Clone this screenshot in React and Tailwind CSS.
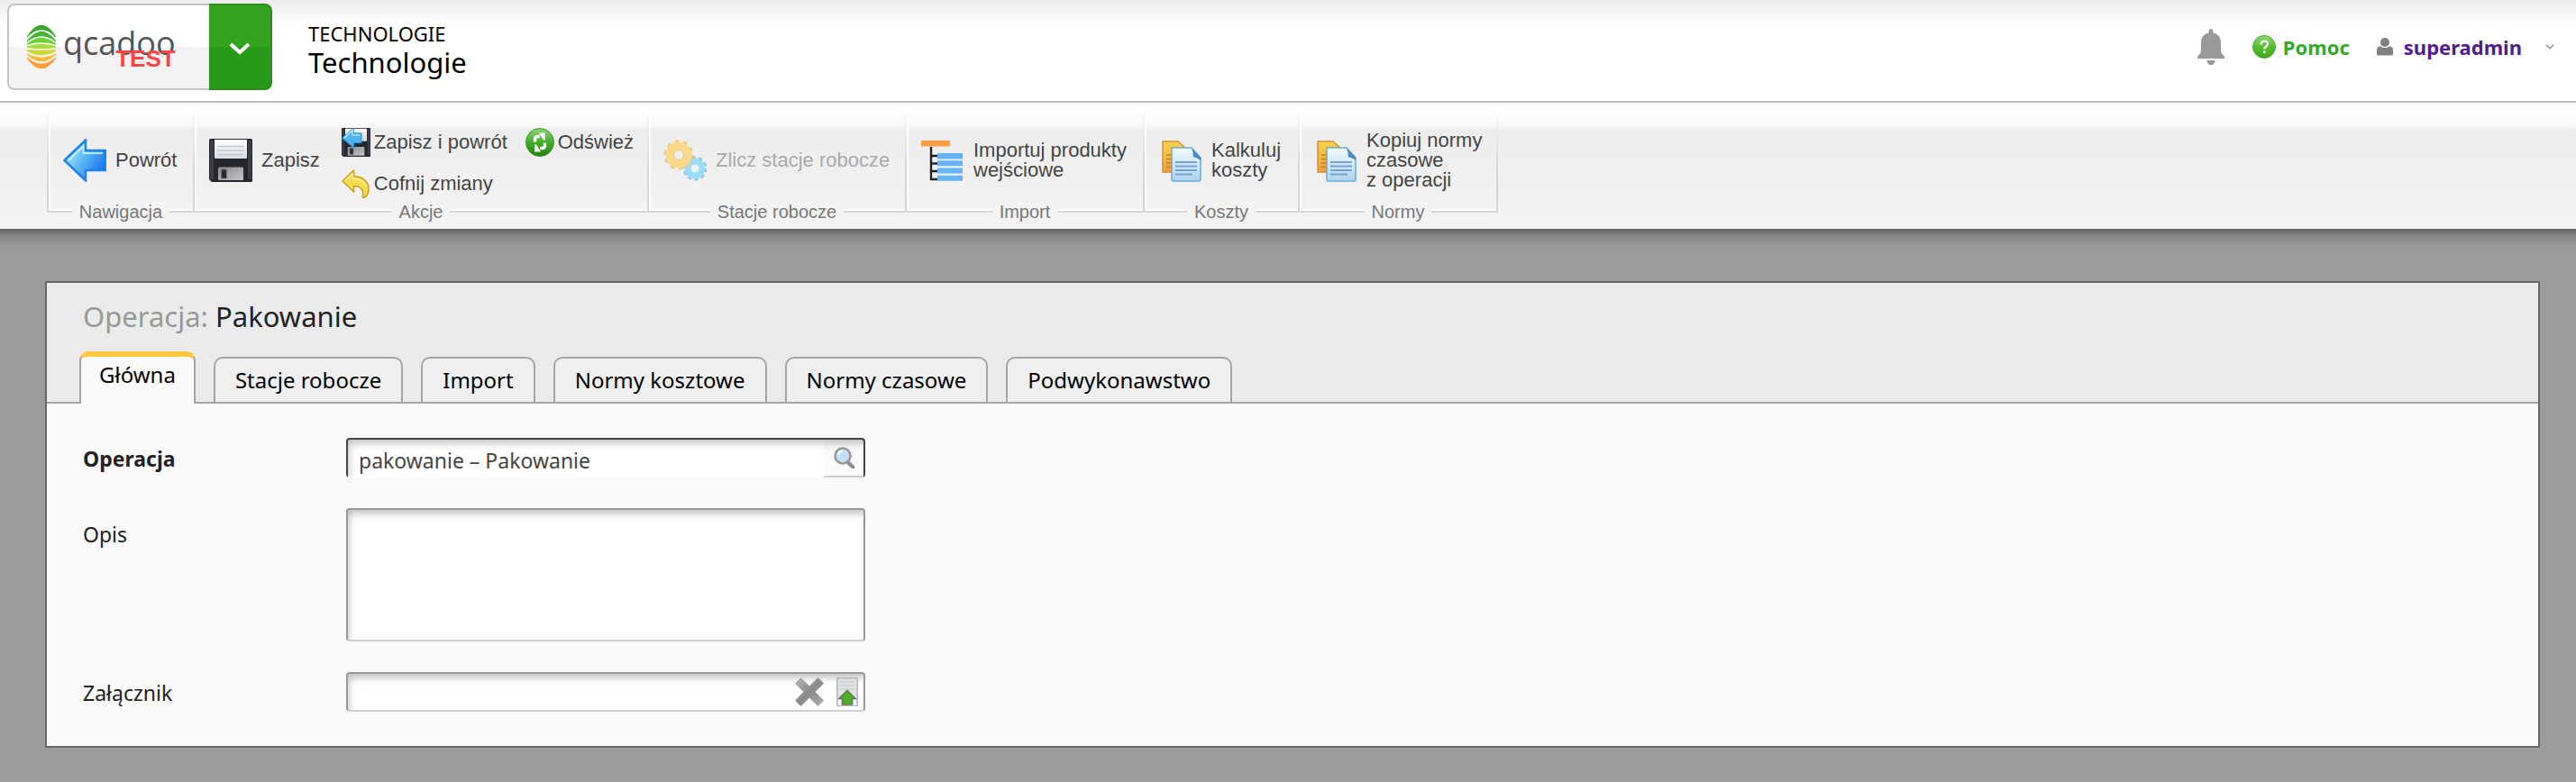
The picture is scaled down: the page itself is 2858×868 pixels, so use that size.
import React from "react";

const HUMANIST = "font-['Noto_Sans','Open_Sans',sans-serif]";

const LOGO_BANDS = [
  { color: "#3aaa2c", top: 0, bottom: 5, edge: 13 },
  { color: "#45b333", top: 7, bottom: 12, edge: 18 },
  { color: "#6cd335", top: 14, bottom: 19, edge: 21 },
  { color: "#a8dc3c", top: 21, bottom: 26, edge: 24 },
  { color: "#cfd92f", top: 28, bottom: 33, edge: 28 },
  { color: "#fbb937", top: 36, bottom: 40, edge: 32 },
  { color: "#ff9f37", top: 43, bottom: 48, edge: 36 },
];

function LogoMark() {
  return (
    <svg className="h-12 w-8 shrink-0" viewBox="0 0 32 48" aria-hidden="true">
      {LOGO_BANDS.map(({ color, top, bottom, edge }) => (
        <path
          key={color}
          d={`M0 ${edge - 0.7}Q16 ${2 * top - edge} 32 ${edge - 0.7}V${edge + 0.7}Q16 ${2 * bottom - edge} 0 ${edge + 0.7}Z`}
          fill={color}
        />
      ))}
    </svg>
  );
}

function Chevron({ className }) {
  return (
    <svg className={className} viewBox="0 0 24 14" fill="none" stroke="currentColor" strokeWidth="4" aria-hidden="true">
      <path d="M2 2l10 9L22 2" />
    </svg>
  );
}

function BellIcon() {
  return (
    <svg className="h-10 w-8" viewBox="0 0 32 40" fill="#999" aria-hidden="true">
      <path d="M16 0c1.500 0 2.300 1 2.300 2.300v2.200C24 5.500 27 10 27 15.500V23c0 3 1 5 3.500 7 1 1 1 3-.5 3H2c-1.500 0-1.500-2-.5-3C4 28 5 26 5 23v-7.500C5 10 8 5.500 13.700 4.500V2.300C13.700 1 14.500 0 16 0z" />
      <path d="M11.500 35h9c0 3-2 5-4.500 5s-4.500-2-4.500-5z" />
    </svg>
  );
}

function HelpIcon() {
  return (
    <svg className="h-[26px] w-[26px]" viewBox="0 0 26 26" aria-hidden="true">
      <defs>
        <linearGradient id="help" x1="0" y1="0" x2="0" y2="1">
          <stop offset="0" stopColor="#8fd873" />
          <stop offset=".5" stopColor="#55bf2c" />
          <stop offset="1" stopColor="#3da81b" />
        </linearGradient>
      </defs>
      <circle cx="13" cy="13" r="12.500" fill="url(#help)" stroke="#4aa830" />
      <path d="M9.500 10.500c0-5 7.500-5 7.500-.7 0 2.700-3.700 2.700-3.700 5.700" fill="none" stroke="#fff" strokeWidth="2.400" />
      <circle cx="13.300" cy="18.800" r="1.500" fill="#fff" />
    </svg>
  );
}

function UserIcon() {
  return (
    <svg className="h-5 w-[18px]" viewBox="0 0 18 20" fill="#808080" aria-hidden="true">
      <circle cx="9" cy="5" r="5" />
      <path d="M0 13c0-3 3-4 4.500-3.500 2.500 2 6.500 2 9 0C15 9 18 10 18 13v5c0 1-.7 1.500-1.700 1.500H1.700C.7 19.500 0 19 0 18z" />
    </svg>
  );
}

function BackIcon() {
  return (
    <svg className="h-12 w-12 shrink-0" viewBox="0 0 48 48" aria-hidden="true">
      <defs>
        <linearGradient id="back" x1="0" y1="0" x2="1" y2=".6">
          <stop offset="0" stopColor="#d5f3fd" />
          <stop offset=".45" stopColor="#6cc5f8" />
          <stop offset="1" stopColor="#1a78ea" />
        </linearGradient>
      </defs>
      <path d="M1.500 24L25 1.500V13h22v22H25v11.500z" fill="url(#back)" stroke="#1b83ee" strokeWidth="2.500" />
      <path d="M6 24L22.500 8v8H44" fill="none" stroke="#d9f4ff" strokeWidth="2" opacity=".8" />
    </svg>
  );
}

function FloppyShape() {
  return (
    <>
      <path d="M0 1.500Q0 0 1.500 0h45Q48 0 48 1.500v45q0 1.500-1.500 1.500H3l-3-3z" fill="#24262e" />
      <path d="M1 2h4v43H1zM43 2h4v43h-4z" fill="#3b3e49" />
      <path d="M6 1h36v19.500Q42 22 40.500 22h-33Q6 22 6 20.500z" fill="url(#paper)" />
      <path d="M9 8.500h30M9 13h30M9 17.500h30" stroke="#c6c9cc" strokeWidth="1.400" />
      <path d="M10 33q0-1.500 1.500-1.500h25q1.500 0 1.500 1.500v13H10z" fill="url(#shutter)" />
      <path d="M13.500 34h6v10h-6z" fill="#26282f" />
      <path d="M13.500 34h6v10h-6z" fill="none" stroke="#777" />
    </>
  );
}

function SaveIcon() {
  return (
    <svg className="h-12 w-12 shrink-0" viewBox="0 0 48 48" aria-hidden="true">
      <defs>
        <linearGradient id="paper" x1="0" y1="0" x2="0" y2="1">
          <stop offset="0" stopColor="#fff" />
          <stop offset="1" stopColor="#d8dde6" />
        </linearGradient>
        <linearGradient id="shutter" x1="0" y1="0" x2="1" y2="1">
          <stop offset="0" stopColor="#8a8a8a" />
          <stop offset="1" stopColor="#c4c4c4" />
        </linearGradient>
      </defs>
      <FloppyShape />
    </svg>
  );
}

function SaveBackIcon() {
  return (
    <svg className="h-8 w-8 shrink-0" viewBox="0 0 48 48" aria-hidden="true">
      <FloppyShape />
      <path d="M1 17L20 0v9h13v16H20v8z" fill="#4db4f0" stroke="#2b90d8" strokeWidth="1.500" />
      <path d="M4 17L18 4v8h13" fill="none" stroke="#b5e4fb" strokeWidth="2.500" />
    </svg>
  );
}

function RefreshIcon() {
  return (
    <svg className="h-8 w-8 shrink-0" viewBox="0 0 32 32" aria-hidden="true">
      <defs>
        <linearGradient id="refresh" x1="0" y1="0" x2="0" y2="1">
          <stop offset="0" stopColor="#8ed67c" />
          <stop offset=".5" stopColor="#3fae27" />
          <stop offset="1" stopColor="#2b7d14" />
        </linearGradient>
      </defs>
      <circle cx="16" cy="16" r="15.500" fill="url(#refresh)" stroke="#3a9a25" />
      <path d="M10.500 15.500v-3q0-3 3-3H16M21.500 16.500v3q0 3-3 3H16" fill="none" stroke="#fff" strokeWidth="3.400" />
      <path d="M15 5.500h7v8h-2zM17 26.500h-7v-8h2z" fill="#fff" />
    </svg>
  );
}

function UndoIcon() {
  return (
    <svg className="h-8 w-8 shrink-0" viewBox="0 0 32 32" aria-hidden="true">
      <path
        d="M1 13L13.500 1v6.500C23 8 30 13 30 22c0 4-2 8-5 9.300-1 .4-2 .2-1.500-.9C25 24 22 18.500 13.500 18.500V25z"
        fill="#f4da4f"
        stroke="#c9a227"
        strokeWidth="1.600"
        strokeLinejoin="round"
      />
      <path d="M4 12.500L12 5v5c8 0 14 4 15.500 9" fill="none" stroke="#fdf3a5" strokeWidth="1.400" />
    </svg>
  );
}

function GearsIcon() {
  return (
    <svg className="h-12 w-12 shrink-0" viewBox="0 0 48 48" aria-hidden="true">
      <g fill="none">
        <circle cx="35" cy="33" r="11.500" stroke="#8cc9e6" strokeWidth="4" strokeDasharray="4 3.230" />
        <circle cx="35" cy="33" r="8" stroke="#9bdcf6" strokeWidth="7" />
        <circle cx="17" cy="18" r="15" stroke="#eeca7b" strokeWidth="3" strokeDasharray="4.700 4.720" />
        <circle cx="17" cy="18" r="10" stroke="#fbd98c" strokeWidth="9" />
        <circle cx="17" cy="18" r="5.500" stroke="#eec57a" strokeWidth="1" />
      </g>
    </svg>
  );
}

function TreeIcon() {
  return (
    <svg className="h-12 w-12 shrink-0" viewBox="0 0 48 48" aria-hidden="true">
      <path d="M11 9v36h8M11 19h8M11 27.500h8M11 36h8" fill="none" stroke="#1e2328" strokeWidth="2.400" />
      <path d="M0 2h32v6.500H0z" fill="#ff9d45" />
      <path d="M18 16h28v6.500H18zM18 24.300h28v6H18zM18 32.500h28v6H18zM18 40.700h28v6H18z" fill="#66b3f7" />
    </svg>
  );
}

function CopyIcon() {
  return (
    <svg className="h-12 w-12 shrink-0" viewBox="-3 -1 48 48" aria-hidden="true">
      <defs>
        <linearGradient id="sheetBack" x1="0" y1="0" x2="0" y2="1">
          <stop offset="0" stopColor="#f8d54c" />
          <stop offset="1" stopColor="#eda03c" />
        </linearGradient>
        <linearGradient id="sheetFront" x1="0" y1="0" x2="0" y2="1">
          <stop offset="0" stopColor="#f3fbff" />
          <stop offset="1" stopColor="#a9d6f0" />
        </linearGradient>
      </defs>
      <path d="M1 2h17l9 8v26H1z" fill="url(#sheetBack)" stroke="#d89030" strokeWidth="1.500" />
      <path d="M5 17h6M5 21.500h6M5 26h6M5 30.500h6" stroke="#c9792a" strokeWidth="1.500" />
      <path d="M11 9h22l10 11v24q0 2-2 2H13q-2 0-2-2z" fill="url(#sheetFront)" stroke="#6fa9d4" strokeWidth="1.500" />
      <path d="M33 9l10 11v3q-5-4-8-3.500Q35 14 33 9z" fill="#4b88c4" />
      <path d="M15 25h24M15 29.500h24M15 34h24M15 38.500h19" stroke="#7d9fcf" strokeWidth="1.800" />
    </svg>
  );
}

function SearchIcon() {
  return (
    <svg className="h-6 w-6" viewBox="0 0 24 24" aria-hidden="true">
      <path d="M16.500 17l6 5.500" stroke="#8a8a8a" strokeWidth="4" strokeLinecap="round" />
      <circle cx="11" cy="10" r="8.500" fill="#c3e0fa" stroke="#9a9a9a" strokeWidth="2.600" />
      <path d="M6 9q1-4 5-4.500" fill="none" stroke="#fff" strokeWidth="2.500" />
    </svg>
  );
}

function CrossIcon() {
  return (
    <svg className="h-8 w-8" viewBox="0 0 32 32" aria-hidden="true">
      <defs>
        <linearGradient id="cross" x1="0" y1="0" x2="1" y2="1">
          <stop offset="0" stopColor="#b8b8b8" />
          <stop offset=".5" stopColor="#8a8a8a" />
          <stop offset="1" stopColor="#b0b0b0" />
        </linearGradient>
      </defs>
      <path d="M6.500 0L16 9.500 25.500 0 32 6.500 22.500 16l9.500 9.500-6.500 6.500L16 22.500 6.500 32 0 25.500 9.500 16 0 6.500z" fill="url(#cross)" />
    </svg>
  );
}

function UploadIcon() {
  return (
    <svg className="h-8 w-6" viewBox="0 0 24 32" aria-hidden="true">
      <path d="M.8.8h22.400v30.400H.8z" fill="#dfe3e6" stroke="#b3b7b9" strokeWidth="1.500" />
      <path d="M4 5h16M4 9h16M4 13h16" stroke="#cdd1d4" strokeWidth="1.500" />
      <path d="M2 24h20v7H2z" fill="#f4f4f4" />
      <path d="M12 14.500l9 9h-3.500v6.500h-11v-6.500H3z" fill="#4fae2c" stroke="#5d7a50" strokeWidth="1.600" />
    </svg>
  );
}

function RibbonGroup({ label, className, children }) {
  return (
    <section
      aria-label={label}
      className={`flex h-[110px] flex-col border-b-2 border-l-2 shadow-[inset_2px_-2px_0_#fff] [border-image:linear-gradient(to_bottom,#f8f8f8,#d6d6d6_60px)_1] ${className}`}
    >
      <div className="flex flex-1 items-center pt-[6px] pl-4">{children}</div>
      <h2 className="-mb-[13px] self-center bg-[#f3f3f3] px-2 text-xl leading-6 text-[#777]">{label}</h2>
    </section>
  );
}

function RibbonButton({ icon, children, disabled, small }) {
  return (
    <button
      type="button"
      disabled={disabled}
      className={`flex items-center text-left text-[22px] leading-[22px] whitespace-nowrap ${small ? "gap-1" : "gap-[10px]"} ${disabled ? "text-[#aaa]" : "text-[#444]"}`}
    >
      {icon}
      <span>{children}</span>
    </button>
  );
}

function Ribbon() {
  return (
    <nav
      aria-label="Akcje"
      className="flex h-[140px] bg-[linear-gradient(to_bottom,#fafafa,#fff_8px,#f8f8f8_27px,#ededed_30px,#f4f4f4)] pt-3 pl-[52px] font-['Liberation_Sans',Arial,sans-serif]"
    >
      <RibbonGroup label="Nawigacja" className="w-[162px]">
        <RibbonButton icon={<BackIcon />}>Powrót</RibbonButton>
      </RibbonGroup>
      <RibbonGroup label="Akcje" className="w-[504px]">
        <RibbonButton icon={<SaveIcon />}>Zapisz</RibbonButton>
        <div className="mt-[6px] ml-6 flex flex-col gap-[14px]">
          <div className="flex gap-5">
            <RibbonButton small icon={<SaveBackIcon />}>Zapisz i powrót</RibbonButton>
            <RibbonButton small icon={<RefreshIcon />}>Odśwież</RibbonButton>
          </div>
          <RibbonButton small icon={<UndoIcon />}>Cofnij zmiany</RibbonButton>
        </div>
      </RibbonGroup>
      <RibbonGroup label="Stacje robocze" className="w-[286px]">
        <RibbonButton disabled icon={<GearsIcon />}>Zlicz stacje robocze</RibbonButton>
      </RibbonGroup>
      <RibbonGroup label="Import" className="w-[264px]">
        <RibbonButton icon={<TreeIcon />}>
          Importuj produkty
          <br />
          wejściowe
        </RibbonButton>
      </RibbonGroup>
      <RibbonGroup label="Koszty" className="w-[172px]">
        <RibbonButton icon={<CopyIcon />}>
          Kalkuluj
          <br />
          koszty
        </RibbonButton>
      </RibbonGroup>
      <RibbonGroup label="Normy" className="w-[222px] border-r-2">
        <RibbonButton icon={<CopyIcon />}>
          Kopiuj normy
          <br />
          czasowe
          <br />z operacji
        </RibbonButton>
      </RibbonGroup>
    </nav>
  );
}

function Header() {
  return (
    <header className="flex h-[114px] items-start border-b-2 border-[#bbb] bg-[linear-gradient(to_bottom,#ececec,#fff_26px)] pt-1 pl-2">
      <div className="flex h-24">
        <a
          href="#start"
          className="flex w-56 items-center rounded-l-lg border-2 border-r-0 border-[#c4c4c4] bg-[linear-gradient(to_bottom,#fff_50%,#f3f3f3_50%)] pl-5"
        >
          <LogoMark />
          <span className="relative mb-2 ml-2 text-4xl leading-[56px] font-medium text-[#555] font-['Open_Sans',sans-serif]">
            qcadoo
            <span className="absolute right-0 -bottom-px text-[26px] leading-6 font-bold text-[#ff4444] font-['Liberation_Sans',Arial,sans-serif]">
              TEST
            </span>
          </span>
        </a>
        <button
          type="button"
          aria-label="Menu"
          className="flex w-[70px] items-center justify-center rounded-r-lg border-2 border-l-0 border-[#269019] bg-[linear-gradient(to_bottom,#33a31f_50%,#29991a_50%)] text-white"
        >
          <Chevron className="mt-1 h-[14px] w-6" />
        </button>
      </div>
      <div className="ml-10 pt-[19px] text-black">
        <p className="text-[22px] leading-7">TECHNOLOGIE</p>
        <h1 className="text-[31px] leading-9">Technologie</h1>
      </div>
      <div className="mt-7 mr-6 ml-auto flex items-center text-[22px] leading-7 font-bold">
        <button type="button" aria-label="Powiadomienia" className="mr-[30px]">
          <BellIcon />
        </button>
        <a href="#pomoc" className="mr-[30px] flex items-center gap-2 text-[#35a826]">
          <HelpIcon />
          Pomoc
        </a>
        <button type="button" className="flex items-center text-[#551a8b]">
          <UserIcon />
          <span className="mr-[26px] ml-3">superadmin</span>
          <span className="text-[#999]">
            <Chevron className="h-[6px] w-[10px]" />
          </span>
        </button>
      </div>
    </header>
  );
}

const TABS = ["Główna", "Stacje robocze", "Import", "Normy kosztowe", "Normy czasowe", "Podwykonawstwo"];

function Tabs() {
  return (
    <div role="tablist" className="-mb-[2px] flex items-end gap-5 pl-9">
      {TABS.map((tab, i) =>
        i === 0 ? (
          <button
            key={tab}
            type="button"
            role="tab"
            aria-selected="true"
            className="h-[58px] rounded-t-[10px] border-x-2 border-t-[6px] border-x-[#a5a5a5] border-t-[#ffc840] bg-[#fafafa] px-5 pb-3 text-2xl leading-7 text-black"
          >
            {tab}
          </button>
        ) : (
          <button
            key={tab}
            type="button"
            role="tab"
            aria-selected="false"
            className="h-[52px] rounded-t-[10px] border-2 border-[#a5a5a5] bg-[#efefef] px-[22px] text-2xl leading-7 text-black"
          >
            {tab}
          </button>
        ),
      )}
    </div>
  );
}

const INSET = "shadow-[inset_5px_8px_8px_-4px_rgba(0,0,0,0.25)]";

function OperationForm() {
  return (
    <form className="flex flex-col gap-[34px] bg-[#fafafa] py-[38px] pl-10 text-[23px] text-[#222]">
      <div className="flex h-11 items-start">
        <label htmlFor="operacja" className="w-[292px] leading-[46px] font-bold">
          Operacja
        </label>
        <div className={`flex h-11 w-[576px] rounded-[4px] border-2 border-b-0 border-[#444] bg-white ${INSET}`}>
          <input
            id="operacja"
            type="text"
            defaultValue="pakowanie – Pakowanie"
            className="min-w-0 flex-1 border-b-2 border-white pt-[6px] pl-3 text-[#444] outline-none"
          />
          <button
            type="button"
            aria-label="Szukaj"
            className="flex w-11 items-center justify-center border-b-2 border-[#ccc] bg-black/2"
          >
            <SearchIcon />
          </button>
        </div>
      </div>
      <div className="flex items-start">
        <label htmlFor="opis" className="w-[292px] leading-[58px]">
          Opis
        </label>
        <textarea
          id="opis"
          className={`h-[148px] w-[576px] resize-none rounded-[4px] border-2 border-[#999] border-b-[#d0d0d0] bg-white ${INSET}`}
        />
      </div>
      <div className="flex h-11 items-start">
        <label htmlFor="zalacznik" className="w-[292px] leading-[46px]">
          Załącznik
        </label>
        <div
          className={`flex h-11 w-[576px] items-center rounded-[4px] border-2 border-[#999] border-b-[#d0d0d0] bg-white ${INSET}`}
        >
          <input id="zalacznik" type="text" className="min-w-0 flex-1 pl-3 outline-none" />
          <button type="button" aria-label="Usuń">
            <CrossIcon />
          </button>
          <button type="button" aria-label="Dodaj plik" className="mr-[6px] ml-[14px]">
            <UploadIcon />
          </button>
        </div>
      </div>
    </form>
  );
}

export default function App() {
  return (
    <div className={`min-h-screen bg-[#9b9b9b] ${HUMANIST}`}>
      <Header />
      <Ribbon />
      <div className="bg-[linear-gradient(to_bottom,#606060,#858585_8px,#9b9b9b_20px)] pt-[58px] pr-10 pl-[50px]">
        <main className="border-2 border-[#666] bg-[#ebebeb]">
          <div className="border-b-2 border-[#a5a5a5]">
            <h2 className="pt-[17px] pb-[19px] pl-10 text-[31px] leading-10 text-[#222]">
              <span className="text-[#999]">Operacja:</span> Pakowanie
            </h2>
            <Tabs />
          </div>
          <OperationForm />
        </main>
      </div>
    </div>
  );
}
